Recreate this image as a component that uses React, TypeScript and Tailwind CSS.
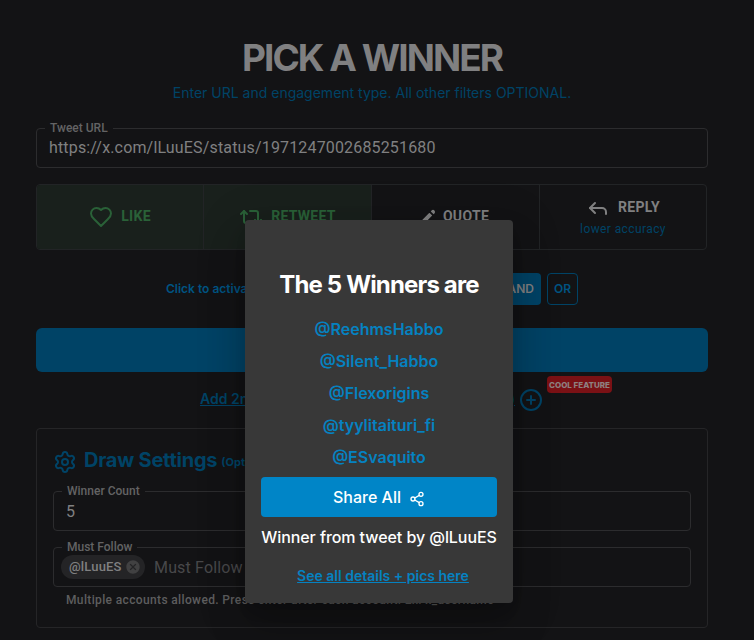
import { ReactNode } from 'react';
import { CirclePlus, Repeat2, Reply, Settings, Share2 } from 'lucide-react';
import { HiPencil } from 'react-icons/hi';
import { MdCancel } from 'react-icons/md';

const winners = ['@ReehmsHabbo', '@Silent_Habbo', '@Flexorigins', '@tyylitaituri_fi', '@ESvaquito'];

function HeartIcon() {
  return (
    <svg width="24" height="24" viewBox="0 0 24 24" fill="none" stroke="currentColor" strokeWidth="2" strokeLinecap="round" strokeLinejoin="round">
      <path d="M19 14c1.49-1.46 3-3.21 3-5.5A5.5 5.5 0 0 0 16.5 3c-1.76 0-3 .5-4.5 2-1.5-1.5-2.74-2-4.5-2A5.5 5.5 0 0 0 2 8.5c0 2.3 1.5 4.05 3 5.5l7 7Z" />
    </svg>
  );
}

// Outlined input with the label sitting in a notch of the border
function Field({ label, children }: { label: string; children: ReactNode }) {
  return (
    <fieldset className="h-12 rounded-[4px] border border-[#2c2c2e] pl-3 font-[Roboto,sans-serif]">
      <legend className="-ml-1 h-4 px-[5px] text-[12px] leading-4 font-medium text-[#636364]">{label}</legend>
      <div className="flex h-[30px] items-center pb-[6px] text-[16px] tracking-[0.16px] text-[#808081]">{children}</div>
    </fieldset>
  );
}

function WinnersDialog() {
  return (
    <div className="absolute top-[220px] left-[245px] flex h-[383px] w-[268px] flex-col items-center rounded-[4px] bg-[#383838] px-4 shadow-[0_11px_15px_-7px_rgba(0,0,0,0.2),0_24px_38px_3px_rgba(0,0,0,0.14),0_9px_46px_8px_rgba(0,0,0,0.12)]">
      <h2 className="mt-[49px] text-[24px] leading-8 font-bold tracking-[-0.85px] whitespace-nowrap text-white">The 5 Winners are</h2>
      <ul className="mt-3 text-center text-[16px] leading-8 font-semibold text-[#0582c1]">
        {winners.map(name => (
          <li key={name}>{name}</li>
        ))}
      </ul>
      <button className="mt-1 flex h-10 w-full shrink-0 items-center justify-center rounded-[4px] bg-[#0085c7] text-[16px] font-medium text-white">
        Share All
        <Share2 size={16} className="mt-[3px] ml-2" />
      </button>
      <p className="mt-2 text-[16px] leading-6 font-medium tracking-[-0.07px] whitespace-nowrap text-white">Winner from tweet by @lLuuES</p>
      <a className="mt-[17px] ml-2 text-[14px] leading-5 font-semibold text-[#0582c1] underline">See all details + pics here</a>
    </div>
  );
}

export default function App() {
  return (
    <div className="relative h-[640px] w-[754px] overflow-hidden bg-[#131315] font-[Inter,sans-serif]">
      <main className="mx-auto flex w-[672px] -translate-x-[5px] flex-col">
        <h1 className="mt-9 text-center text-[37px] leading-[44px] font-bold tracking-[-1.95px] text-[#808081]">PICK A WINNER</h1>
        <p className="mt-[3px] mb-[27px] text-center text-[14px] leading-5 text-[#004366]">
          Enter URL and engagement type. All other filters OPTIONAL.
        </p>

        <div className="-mt-[10px]">
          <Field label="Tweet URL">https://x.com/lLuuES/status/1971247002685251680</Field>
        </div>

        <div className="mt-4 grid h-[66px] w-[671px] grid-cols-[167px_168px_168px_166px] divide-x divide-[#222426] overflow-hidden rounded-[4px] border border-[#222426] font-[Roboto,sans-serif] text-[14px] font-bold tracking-[0.3px] text-[#808081]">
          <div className="flex items-center justify-center gap-2 bg-[#19201c] pb-px text-[#2a6138]">
            <HeartIcon />
            LIKE
          </div>
          <div className="flex items-center justify-center gap-2 bg-[#19201c] pb-px text-[#2a6138]">
            <Repeat2 size={24} />
            RETWEET
          </div>
          <div className="flex items-center justify-center gap-[5px] pr-1 pb-px">
            <HiPencil size={20} />
            QUOTE
          </div>
          <div className="flex flex-col items-center justify-center">
            <div className="flex h-6 items-center gap-2 pb-px">
              <Reply size={24} />
              REPLY
            </div>
            <span className="text-[12px] leading-[18px] font-normal tracking-[0.4px] text-[#004366]">lower accuracy</span>
          </div>
        </div>

        <div className="mt-[23px] ml-[130px] flex h-8 w-[412px] items-center text-[12px] font-semibold">
          <span className="flex-1 text-[#005483]">Click to activate</span>
          <span className="flex h-8 w-[46px] items-center justify-end rounded-[4px] bg-[#004366] pr-[7px] text-[#808081]">AND</span>
          <span className="ml-[6px] flex h-8 w-[31px] items-center justify-center rounded-[4px] border border-[#004366] text-[#005483]">OR</span>
        </div>

        <button className="mt-[23px] h-11 rounded-[6px] bg-[#004366]" />

        <div className="mt-1 ml-[164px] flex h-[46px] text-[#004366]">
          <a className="mt-[13px] flex h-5 w-[315px] justify-between text-[14px] leading-5 font-semibold underline">
            <span>Add 2nd Tweet</span>
            <span>(optional)</span>
          </a>
          <CirclePlus size={24} className="mt-3 ml-1" />
          <span className="ml-1 flex h-[17px] w-[65px] items-center justify-center rounded-[4px] bg-[#7a1115] text-[8px] font-extrabold whitespace-nowrap text-[#8e8080]">
            COOL FEATURE
          </span>
        </div>

        <section className="mt-[6px] h-[200px] rounded-[4px] border border-[#252527] px-4">
          <div className="mt-[19px] flex h-6 items-center text-[#004366]">
            <Settings size={24} className="mt-[3px]" />
            <h2 className="ml-[7px] text-[20px] font-bold tracking-[-0.23px]">Draw Settings</h2>
            <span className="mt-[5px] ml-1 text-[11px] font-bold">(Optional)</span>
          </div>
          <div className="mt-[11px]">
            <Field label="Winner Count">
              <span className="mt-[2px]">5</span>
            </Field>
          </div>
          <div className="mt-2">
            <Field label="Must Follow">
              <span className="-ml-[5px] flex h-6 w-[84px] shrink-0 items-center justify-between rounded-full bg-[#242426] pr-1 pl-2 text-[13px] font-medium">
                @lLuuES
                <MdCancel size={16} className="text-[#414142]" />
              </span>
              <span className="mt-[2px] ml-[9px] text-[#48484a]">Must Follow</span>
            </Field>
          </div>
          <p className="mt-[3px] ml-[13px] font-[Roboto,sans-serif] text-[12px] leading-5 font-medium tracking-[0.36px] text-[#5e5e5f]">
            Multiple accounts allowed. Press enter after each account. Ex. x_username
          </p>
        </section>
      </main>

      <WinnersDialog />
    </div>
  );
}
